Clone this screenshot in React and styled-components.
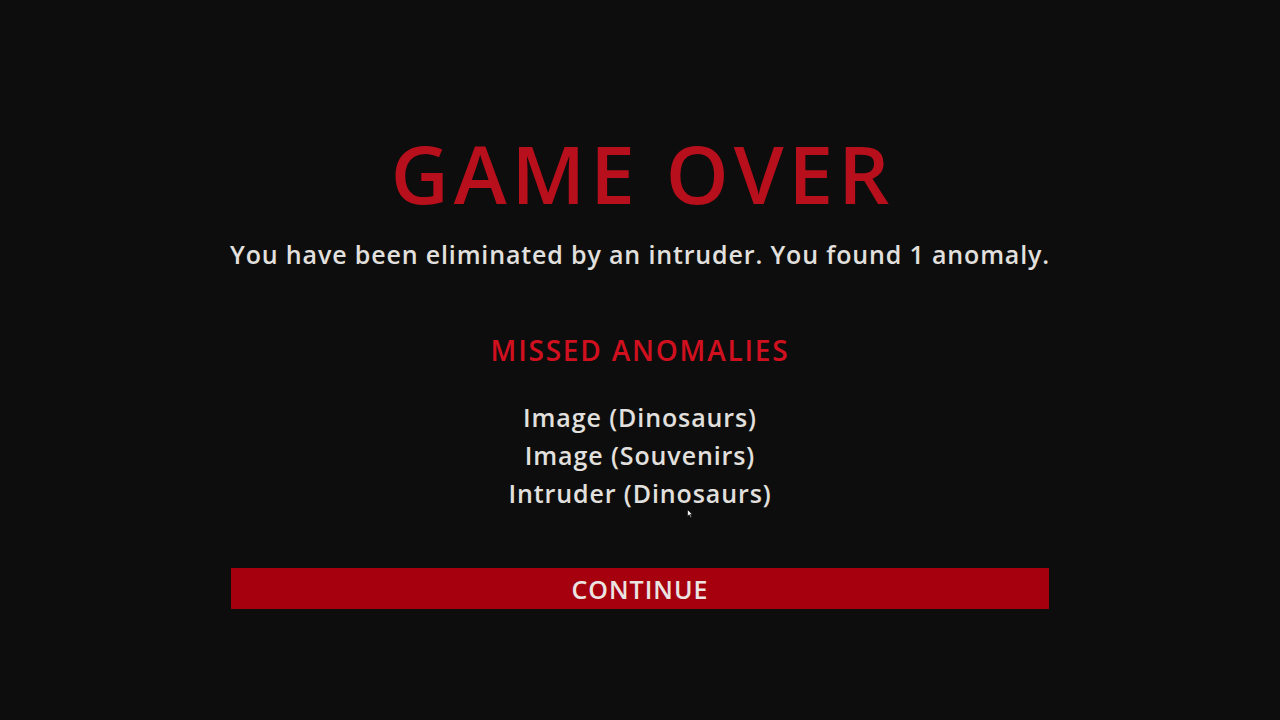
import React from 'react'
import styled, { createGlobalStyle } from 'styled-components'

const GlobalStyle = createGlobalStyle`
  html, body {
    margin: 0;
    padding: 0;
    background: #0e0d0d;
  }
  body {
    font-family: "Open Sans", "Noto Sans", sans-serif;
  }
`

const Screen = styled.div`
  position: relative;
  width: 1280px;
  height: 720px;
  overflow: hidden;
  background: #0e0d0d;
  display: flex;
  justify-content: center;
`

const Panel = styled.div`
  width: 818px;
  padding-top: 120px;
  display: flex;
  flex-direction: column;
  align-items: center;
  text-align: center;
`

const Title = styled.h1`
  margin: 0;
  font-size: 80px;
  line-height: 106px;
  font-weight: 600;
  color: #b80f1c;
  letter-spacing: 5px;
  padding-left: 5px;
`

const Summary = styled.p`
  margin: 10px 0 0;
  font-size: 25px;
  line-height: 36px;
  font-weight: 600;
  color: #e2e0de;
  letter-spacing: 0.85px;
  white-space: nowrap;
`

const Heading = styled.h2`
  margin: 58px 0 0;
  font-size: 28px;
  line-height: 40px;
  font-weight: 600;
  color: #d0101f;
  letter-spacing: 1.8px;
`

const List = styled.ul`
  list-style: none;
  margin: 28px 0 0;
  padding: 0;
`

const Item = styled.li`
  font-size: 25px;
  line-height: 38px;
  font-weight: 600;
  color: #e2e0de;
  letter-spacing: 0.9px;
`

const ContinueButton = styled.button`
  margin-top: 56px;
  width: 818px;
  height: 41px;
  border: none;
  background: #a6000f;
  color: #ebe4e2;
  font-family: "Open Sans", "Noto Sans", sans-serif;
  font-size: 25px;
  font-weight: 600;
  letter-spacing: 1px;
  cursor: pointer;
`

const Pointer = styled.svg`
  position: absolute;
  left: 687px;
  top: 509px;
`

const anomalies = ['Image (Dinosaurs)', 'Image (Souvenirs)', 'Intruder (Dinosaurs)']

const App = () => (
  <>
    <GlobalStyle />
    <Screen>
      <Panel>
        <Title>GAME OVER</Title>
        <Summary>You have been eliminated by an intruder. You found 1 anomaly.</Summary>
        <Heading>MISSED ANOMALIES</Heading>
        <List>
          {anomalies.map((a) => (
            <Item key={a}>{a}</Item>
          ))}
        </List>
        <ContinueButton>CONTINUE</ContinueButton>
      </Panel>
      <Pointer width="6" height="9" viewBox="0 0 6 9">
        <path d="M0.5 0.5 L0.5 7.5 L2.2 5.8 L3.6 8.5 L4.6 8 L3.3 5.4 L5.5 5.4 Z" fill="#f0f0f0" stroke="#000" strokeWidth="0.6" />
      </Pointer>
    </Screen>
  </>
)

export default App
